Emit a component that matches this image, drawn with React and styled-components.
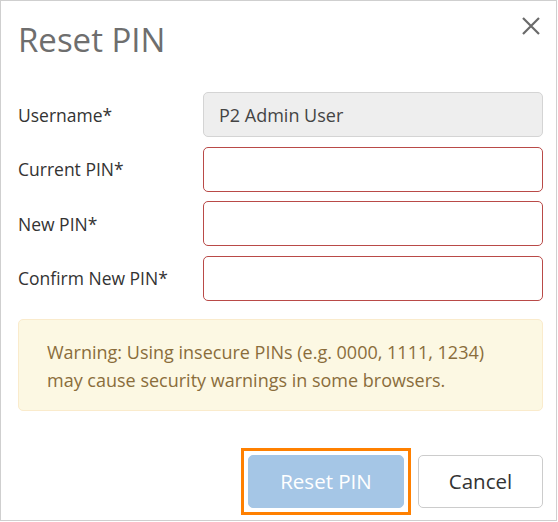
import React from "react"
import styled, { createGlobalStyle } from "styled-components"

const Global = createGlobalStyle`
  body {
    margin: 0;
    background: #fff;
    font-family: "Open Sans", "Noto Sans", sans-serif;
  }
  * { box-sizing: border-box; }
`

const Dialog = styled.div`
  width: 557px;
  height: 521px;
  border: 1px solid #cfcfcf;
  padding: 0 13px 0 17px;
  background: #fff;
`

const Header = styled.div`
  display: flex;
  justify-content: space-between;
  align-items: flex-start;
  padding-top: 14px;
  height: 91px;
`

const Title = styled.h1`
  margin: 5px 0 0 0;
  font-size: 33px;
  line-height: 40px;
  font-weight: 400;
  color: #6e6e6e;
`

const Close = styled.button`
  width: 22px;
  height: 22px;
  margin: 0 1px 0 0;
  padding: 2px;
  border: 0;
  background: none;
  color: #6a6a6a;
  display: flex;
`

const Form = styled.div`
  display: grid;
  grid-template-columns: 185px 1fr;
  row-gap: 9.5px;
  align-items: center;
`

const Label = styled.label`
  font-size: 17.5px;
  color: #333;
`

const Input = styled.div`
  height: 45px;
  border-radius: 5px;
  border: 1px solid ${p => (p.$invalid ? "#b94a48" : "#d4d4d4")};
  background: ${p => (p.$readOnly ? "#eeeeee" : "#fff")};
  padding: 0 15px;
  display: flex;
  align-items: center;
  font-size: 18px;
  color: #444;
`

const Warning = styled.div`
  margin-top: 18px;
  height: 92px;
  border: 1px solid #faebcc;
  background: #fcf8e3;
  border-radius: 5px;
  padding: 18px 28px;
  font-size: 18px;
  line-height: 28px;
  color: #8a6d3b;
`

const Actions = styled.div`
  display: flex;
  justify-content: flex-end;
  align-items: center;
  gap: 7px;
  margin-top: 37px;
`

const FocusRing = styled.span`
  display: flex;
  padding: 4px;
  border: 3px solid #ff8000;
`

const Button = styled.button`
  height: 53px;
  border-radius: 5px;
  font-family: inherit;
  font-size: 20.5px;
  padding: 0;
  width: ${p => (p.$primary ? "156px" : "125px")};
  border: 1px solid ${p => (p.$primary ? "#a5c6e6" : "#cccccc")};
  background: ${p => (p.$primary ? "#a5c6e6" : "#fff")};
  color: ${p => (p.$primary ? "#fff" : "#333")};
  outline: none;
`

const fields = [
  { label: "Username*", value: "P2 Admin User", readOnly: true },
  { label: "Current PIN*" },
  { label: "New PIN*" },
  { label: "Confirm New PIN*" },
]

export default function App() {
  return (
    <>
      <Global />
      <Dialog>
        <Header>
          <Title>Reset PIN</Title>
          <Close aria-label="Close">
            <svg width="18" height="18" viewBox="0 0 18 18">
              <path d="M1 1 L17 17 M17 1 L1 17" stroke="currentColor" strokeWidth="2.2" />
            </svg>
          </Close>
        </Header>
        <Form>
          {fields.map(f => (
            <React.Fragment key={f.label}>
              <Label>{f.label}</Label>
              <Input $readOnly={f.readOnly} $invalid={!f.readOnly}>
                {f.value}
              </Input>
            </React.Fragment>
          ))}
        </Form>
        <Warning>
          Warning: Using insecure PINs (e.g. 0000, 1111, 1234)
          <br />
          may cause security warnings in some browsers.
        </Warning>
        <Actions>
          <FocusRing>
            <Button $primary disabled>Reset PIN</Button>
          </FocusRing>
          <Button>Cancel</Button>
        </Actions>
      </Dialog>
    </>
  )
}
